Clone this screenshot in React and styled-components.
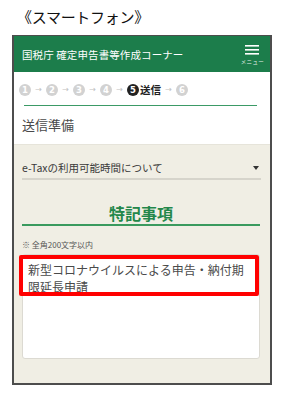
import React from "react";
import styled, { createGlobalStyle } from "styled-components";

const Global = createGlobalStyle`
  html, body { margin: 0; padding: 0; background: #fff; }
  body { font-family: "Noto Sans CJK JP", "Noto Sans", sans-serif; color: #333; }
`;

const Page = styled.div`
  width: 288px;
  height: 401px;
  overflow: hidden;
`;

const Caption = styled.div`
  padding: 8px 0 0 17px;
  height: 18px;
  font-size: 15px;
  line-height: 18px;
  color: #111;
  letter-spacing: -0.3px;
`;

const Frame = styled.div`
  margin: 9px 0 0 12px;
  width: 260px;
  box-sizing: border-box;
  border: 2px solid #4d4d4d;
  border-top-width: 1px;
  background: #fff;
`;

const Header = styled.div`
  height: 36px;
  background: #1c7d4b;
  display: flex;
  align-items: center;
  justify-content: space-between;
  padding: 0 6px 0 8px;
`;

const HeaderTitle = styled.div`
  color: #fff;
  font-size: 10.5px;
  line-height: 14px;
  letter-spacing: 0.1px;
  margin-top: 1px;
`;

const MenuButton = styled.div`
  display: flex;
  flex-direction: column;
  align-items: center;
  padding-top: 3px;
  color: #fff;
`;

const MenuLabel = styled.div`
  font-size: 5.5px;
  line-height: 7px;
  margin-top: 4px;
  letter-spacing: 0.3px;
  color: #e6f0ea;
`;

const Steps = styled.div`
  display: flex;
  align-items: center;
  padding: 12px 0 0 5px;
  height: 12px;
`;

const Circle = styled.span`
  width: 12px;
  height: 12px;
  border-radius: 50%;
  background: ${(p) => (p.$active ? "#222" : "#d2d2d2")};
  color: #fff;
  font-family: "DejaVu Sans", sans-serif;
  font-weight: bold;
  font-size: 8.5px;
  line-height: 12px;
  text-align: center;
  flex: none;
`;

const Arrow = styled.span`
  width: 15px;
  text-align: center;
  color: #c2c2c2;
  font-size: 8px;
  line-height: 12px;
  font-family: "DejaVu Sans", sans-serif;
  flex: none;
`;

const ActiveLabel = styled.span`
  font-weight: bold;
  font-size: 10.5px;
  line-height: 12px;
  color: #222;
  margin-left: 1px;
`;

const Rule = styled.div`
  margin: 9px 13px 0 10px;
  height: 1px;
  background: #3b9a66;
`;

const SectionTitle = styled.div`
  margin-top: 9px;
  padding: 0 0 9px 8px;
  font-size: 13px;
  line-height: 20px;
  color: #4a4a4a;
  border-bottom: 1px solid #e6e4da;
`;

const Body = styled.div`
  background: #f0eee4;
  padding: 16px 10px 24px 8px;
`;

const Dropdown = styled.div`
  display: flex;
  align-items: center;
  justify-content: space-between;
  height: 14px;
  padding-bottom: 3px;
  border-bottom: 2px solid #d6d4cb;
  margin-right: -1px;
`;

const DropdownText = styled.span`
  font-size: 10.5px;
  line-height: 14px;
  color: #3a3a3a;
`;

const Caret = styled.span`
  width: 0;
  height: 0;
  border-left: 3px solid transparent;
  border-right: 3px solid transparent;
  border-top: 4px solid #333;
  margin-right: 2px;
`;

const Heading = styled.div`
  margin-top: 23px;
  text-align: center;
  font-size: 16px;
  line-height: 20px;
  font-weight: bold;
  color: #23874a;
  padding-bottom: 1px;
  border-bottom: 2px solid #3a9a5e;
`;

const Note = styled.div`
  margin-top: 14px;
  font-size: 8px;
  line-height: 10px;
  color: #555;
`;

const FieldWrap = styled.div`
  position: relative;
  margin-top: 4px;
`;

const TextArea = styled.div`
  height: 105px;
  box-sizing: border-box;
  background: #fff;
  border: 1px solid #dcdad2;
  border-radius: 3px;
  padding: 6px 6px 0 5px;
  font-size: 12px;
  line-height: 17px;
  color: #4a4a4a;
`;

const Highlight = styled.div`
  position: absolute;
  left: -3px;
  top: 1px;
  width: 240px;
  height: 41px;
  box-sizing: border-box;
  border: 4px solid #ff0000;
  border-radius: 2px;
  pointer-events: none;
`;

function Hamburger() {
  return (
    <svg width="14" height="10" viewBox="0 0 14 10">
      <rect x="0" y="0" width="14" height="1.6" fill="#fff" />
      <rect x="0" y="4" width="14" height="1.6" fill="#fff" />
      <rect x="0" y="8" width="14" height="1.6" fill="#fff" />
    </svg>
  );
}

export default function App() {
  return (
    <Page>
      <Global />
      <Caption>《スマートフォン》</Caption>
      <Frame>
        <Header>
          <HeaderTitle>国税庁 確定申告書等作成コーナー</HeaderTitle>
          <MenuButton>
            <Hamburger />
            <MenuLabel>メニュー</MenuLabel>
          </MenuButton>
        </Header>
        <Steps>
          <Circle>1</Circle>
          <Arrow>→</Arrow>
          <Circle>2</Circle>
          <Arrow>→</Arrow>
          <Circle>3</Circle>
          <Arrow>→</Arrow>
          <Circle>4</Circle>
          <Arrow>→</Arrow>
          <Circle $active>5</Circle>
          <ActiveLabel>送信</ActiveLabel>
          <Arrow>→</Arrow>
          <Circle>6</Circle>
        </Steps>
        <Rule />
        <SectionTitle>送信準備</SectionTitle>
        <Body>
          <Dropdown>
            <DropdownText>e-Taxの利用可能時間について</DropdownText>
            <Caret />
          </Dropdown>
          <Heading>特記事項</Heading>
          <Note>※ 全角200文字以内</Note>
          <FieldWrap>
            <TextArea>新型コロナウイルスによる申告・納付期限延長申請</TextArea>
            <Highlight />
          </FieldWrap>
        </Body>
      </Frame>
    </Page>
  );
}
